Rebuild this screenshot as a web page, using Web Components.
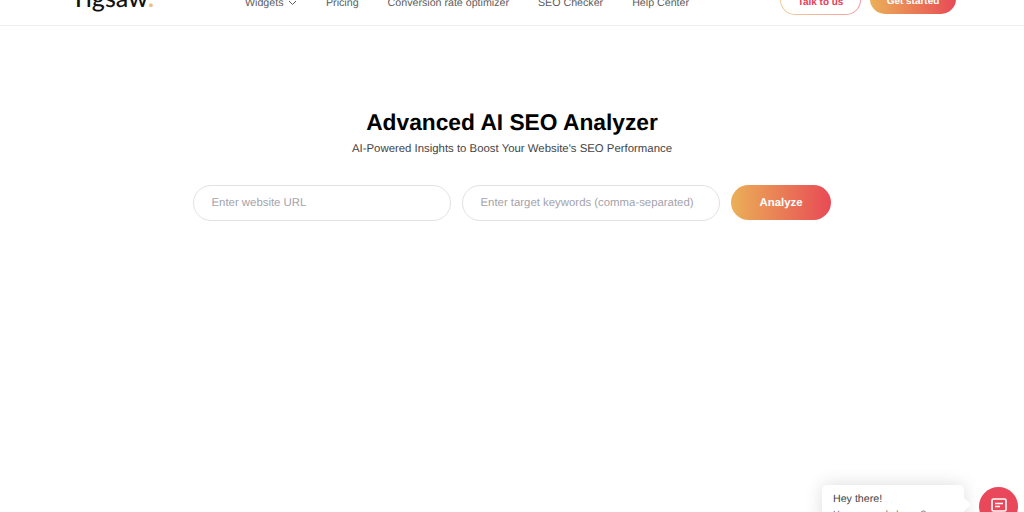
<!DOCTYPE html>
<html lang="en"><head><meta charset="utf-8"><title>Advanced AI SEO Analyzer</title>
<style>
html,body{margin:0;height:512px;overflow:hidden;background:#fff;font-family:"Liberation Sans",Arial,sans-serif;text-rendering:geometricPrecision}
</style></head><body>
<site-header></site-header>
<seo-hero></seo-hero>
<chat-widget></chat-widget>
<script>
function def(name, html){
  customElements.define(name, class extends HTMLElement{
    constructor(){super();this.attachShadow({mode:'open'}).innerHTML=html;}
  });
}
const grad='linear-gradient(90deg,#ebb057,#e84a56)';
def('site-header',`<style>
:host{display:flex;height:25px;border-bottom:1px solid #efefef;overflow:hidden;position:relative;align-items:flex-end}
.logo{position:absolute;left:71px;bottom:12px;font:500 25px/30px Lato,sans-serif;color:#111;white-space:nowrap}
.logo b{color:#f2c078;font-weight:700}
nav{position:absolute;left:245px;bottom:15px;display:flex;gap:29px;font-size:10.670px;line-height:14px;color:#5c5c5c;white-space:nowrap}
nav span{display:flex;align-items:center;gap:4px}
nav svg{margin-right:.5px}
.btns{position:absolute;left:780px;bottom:10px;display:flex;gap:9px;align-items:flex-end}
.talk,.get{box-sizing:border-box;border-radius:15px;font-size:9.960px;font-weight:700;display:flex;justify-content:center;align-items:flex-end;white-space:nowrap}
.talk{width:81px;height:30px;padding-bottom:6px;color:#e8405a;background:linear-gradient(#fff,#fff) padding-box,linear-gradient(90deg,#f3cc98,#f29aa2) border-box;border:1px solid transparent}
.get{width:86px;height:30px;padding-bottom:7px;color:#fff;background:${grad};margin-bottom:1px}
</style>
<div class="logo">Tigsaw<b>.</b></div>
<nav><span>Widgets <svg width="9" height="6" viewBox="0 0 9 6"><path d="M1 1l3.500 3.500L8 1" fill="none" stroke="#5c5c5c" stroke-width="1"/></svg></span><span>Pricing</span><span>Conversion rate optimizer</span><span>SEO Checker</span><span>Help Center</span></nav>
<div class="btns"><div class="talk">Talk to us</div><div class="get">Get started</div></div>`);
def('seo-hero',`<style>
:host{display:flex;flex-direction:column;align-items:center;padding-top:82px;color:#000}
h1{margin:0;font-size:22.750px;line-height:28px;font-weight:700}
p{margin:4px 0 0;font-size:11.380px;line-height:18px;color:#444}
form{display:flex;gap:11px;margin-top:27px;align-items:flex-start}
.in{box-sizing:border-box;width:258px;height:36px;border:1px solid #e2e2e2;border-radius:18px;padding:0 17px 0 17.500px;display:flex;align-items:center;font-size:11.380px;color:#a3a3ab;white-space:nowrap}
.go{width:100px;height:35px;border-radius:18px;background:${grad};color:#fff;font-weight:700;font-size:11.380px;display:flex;align-items:center;justify-content:center}
</style>
<h1>Advanced AI SEO Analyzer</h1>
<p>AI-Powered Insights to Boost Your Website's SEO Performance</p>
<form><div class="in">Enter website URL</div><div class="in">Enter target keywords (comma-separated)</div><div class="go">Analyze</div></form>`);
def('chat-widget',`<style>
:host{position:absolute;left:822px;top:485px;width:196px;height:27px;display:block}
.bubble{position:absolute;left:0;top:0;width:142px;height:60px;background:#fff;border-radius:5px;box-shadow:0 0 18px rgba(0,0,0,.14);box-sizing:border-box;padding:7px 11px;color:#444}
.bubble::after{content:"";position:absolute;left:138px;top:15px;width:9px;height:9px;background:#fff;transform:rotate(45deg)}
.a{font-size:10.670px;line-height:14px}
.b{font-size:9.240px;line-height:12px;margin-top:2px;color:#666}
.c{position:absolute;left:157px;top:2px;width:39px;height:39px;border-radius:50%;background:#e8485a;display:flex;justify-content:center;padding-top:11px;box-sizing:border-box}
</style>
<div class="bubble"><div class="a">Hey there!</div><div class="b">How can we help you?</div></div>
<div class="c"><svg width="16" height="16" viewBox="0 0 16 16"><path d="M2.500 1h11A1.500 1.500 0 0 1 15 2.500v9a1.500 1.500 0 0 1-1.500 1.500H2.500A1.500 1.500 0 0 1 1 11.500v-9A1.500 1.500 0 0 1 2.500 1z" fill="none" stroke="#fff" stroke-width="1.600"/><path d="M4 5.500h8M4 8.500h5" stroke="#fff" stroke-width="1.500"/></svg></div>`);
</script></body></html>
